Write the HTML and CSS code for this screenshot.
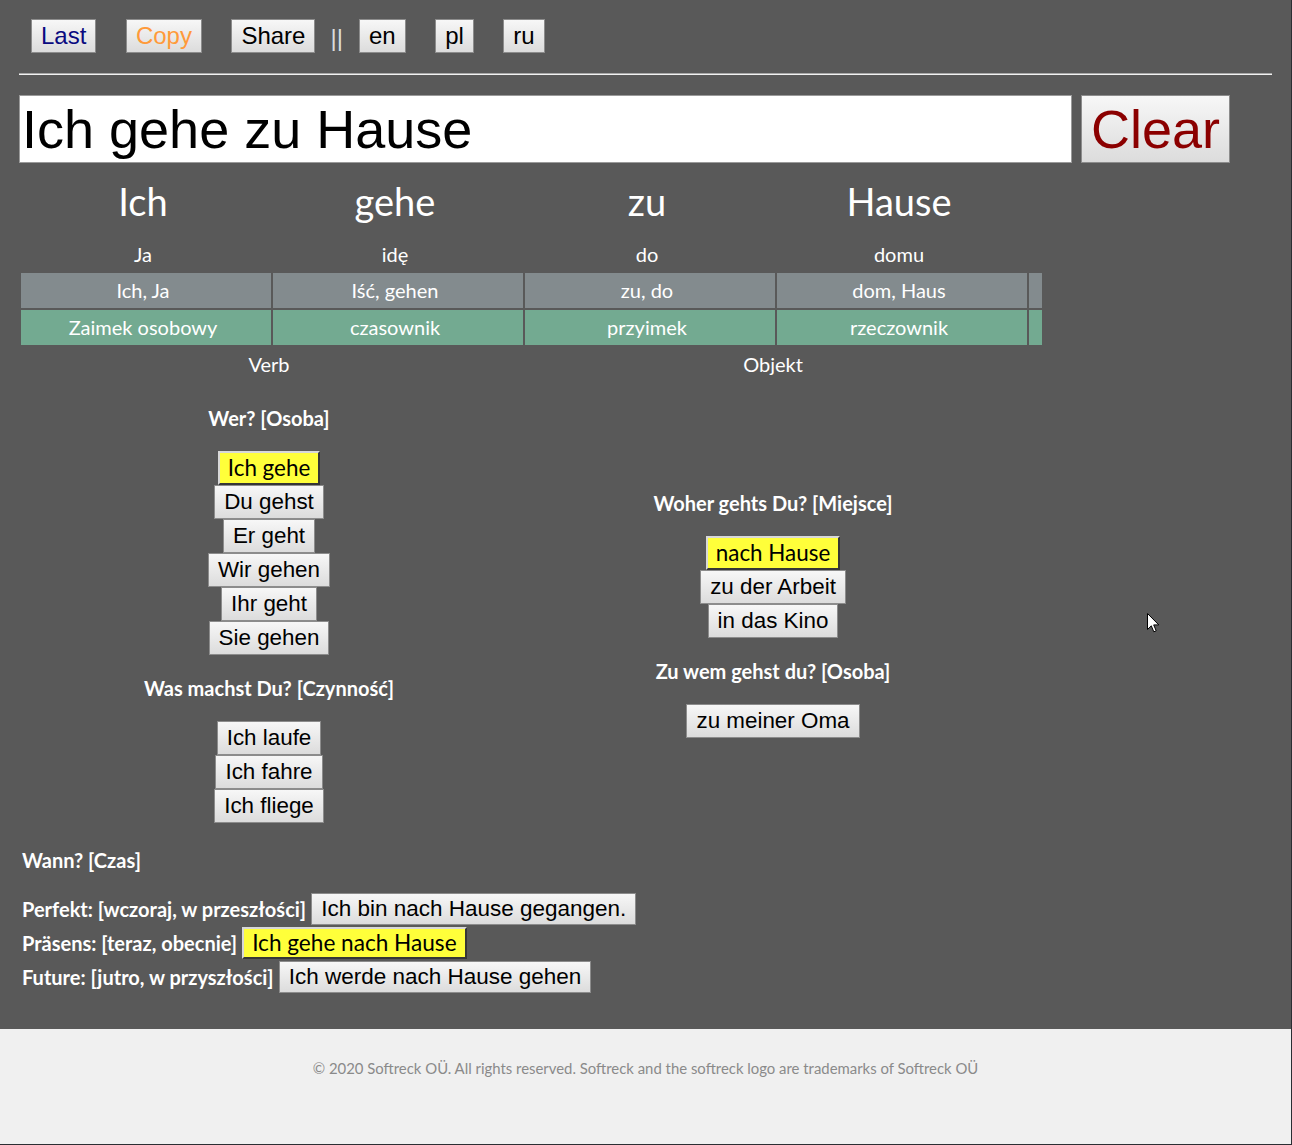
FILE: index.html
```html
<!DOCTYPE html>
<html lang="de">
<head>
<meta charset="utf-8">
<title>Ich gehe zu Hause</title>
<link rel="stylesheet" href="styles.css">
</head>
<body>
<div class="page">
  <main class="main">
    <div class="topbar">
      <button class="tbtn last">Last</button>
      <button class="tbtn copy">Copy</button>
      <button class="tbtn share">Share</button>
      <span class="sep">||</span>
      <button class="tbtn lang">en</button>
      <button class="tbtn lang">pl</button>
      <button class="tbtn lang">ru</button>
    </div>
    <hr class="rule">
    <div class="entry">
      <input class="sentence" type="text" value="Ich gehe zu Hause">
      <button class="clear">Clear</button>
    </div>
    <div class="grid">
      <div class="word">Ich</div>
      <div class="word">gehe</div>
      <div class="word">zu</div>
      <div class="word">Hause</div>
      <div class="word"></div>

      <div class="trans">Ja</div>
      <div class="trans">idę</div>
      <div class="trans">do</div>
      <div class="trans">domu</div>
      <div class="trans"></div>

      <div class="cell base">Ich, Ja</div>
      <div class="cell base">Iść, gehen</div>
      <div class="cell base">zu, do</div>
      <div class="cell base">dom, Haus</div>
      <div class="cell base"></div>

      <div class="cell pos">Zaimek osobowy</div>
      <div class="cell pos">czasownik</div>
      <div class="cell pos">przyimek</div>
      <div class="cell pos">rzeczownik</div>
      <div class="cell pos"></div>

      <div class="role span2">Verb</div>
      <div class="role span2">Objekt</div>
      <div class="role"></div>

      <div class="col span2">
        <h3 class="q">Wer? [Osoba]</h3>
        <button class="opt sel">Ich gehe</button>
        <button class="opt">Du gehst</button>
        <button class="opt">Er geht</button>
        <button class="opt">Wir gehen</button>
        <button class="opt">Ihr geht</button>
        <button class="opt">Sie gehen</button>
        <h3 class="q">Was machst Du? [Czynność]</h3>
        <button class="opt">Ich laufe</button>
        <button class="opt">Ich fahre</button>
        <button class="opt">Ich fliege</button>
      </div>
      <div class="col span2 middle">
        <h3 class="q">Woher gehts Du? [Miejsce]</h3>
        <button class="opt sel">nach Hause</button>
        <button class="opt">zu der Arbeit</button>
        <button class="opt">in das Kino</button>
        <h3 class="q">Zu wem gehst du? [Osoba]</h3>
        <button class="opt">zu meiner Oma</button>
      </div>
    </div>

    <section class="tenses">
      <h3 class="when">Wann? [Czas]</h3>
      <div class="tense"><span class="label">Perfekt: [wczoraj, w przeszłości]</span><button class="tbtn2">Ich bin nach Hause gegangen.</button></div>
      <div class="tense"><span class="label">Präsens: [teraz, obecnie]</span><button class="tbtn2 sel">Ich gehe nach Hause</button></div>
      <div class="tense"><span class="label">Future: [jutro, w przyszłości]</span><button class="tbtn2">Ich werde nach Hause gehen</button></div>
    </section>
  </main>
  <footer class="footer">© 2020 Softreck OÜ. All rights reserved. Softreck and the softreck logo are trademarks of Softreck OÜ</footer>
  <svg class="cursor" width="13" height="21" viewBox="0 0 13 21" aria-hidden="true">
    <path d="M0.5 0.5 L0.5 16.5 L4.3 12.8 L6.8 18.8 L9.2 17.8 L6.7 11.9 L11.8 11.9 Z" fill="#ffffff" stroke="#000000" stroke-width="1" stroke-linejoin="miter"/>
  </svg>
</div>
</body>
</html>
```

FILE: styles.css
```css
html {
  background: #2b2e33;
}
body {
  margin: 0;
}
.page {
  position: relative;
  width: 1291px;
}
.main {
  background: #595959;
  padding: 19px 19px 35px 19px;
  font-family: "Lato", "Open Sans", sans-serif;
  color: #ffffff;
}

/* top bar */
.topbar {
  display: flex;
  align-items: baseline;
  padding-left: 12px;
  height: 34px;
}
.tbtn {
  font-family: "Liberation Sans", Arial, sans-serif;
  font-size: 24px;
  line-height: 28px;
  padding: 2px 9px;
  border: 1px solid #8c8c8c;
  border-radius: 0;
  background: linear-gradient(#f7f7f7, #dcdcdc);
  color: #000000;
  margin: 0 29.5px 0 0;
}
.tbtn.last { color: #0a0a80; }
.tbtn.copy { color: #ff9a3a; }
.tbtn.share { margin-right: 15px; }
.sep {
  font-family: "Liberation Sans", Arial, sans-serif;
  font-size: 24px;
  color: #dcdcdc;
  margin-right: 16px;
  position: relative;
  top: 2px;
}

.rule {
  margin: 20px 0 0 0;
  height: 0;
  border: 0;
  border-top: 1px solid #a8a8a8;
  border-bottom: 1px solid #f2f2f2;
}

/* entry */
.entry {
  display: flex;
  margin-top: 20px;
}
.sentence {
  box-sizing: border-box;
  width: 1053px;
  height: 68px;
  padding: 2px;
  border: 1px solid #9a9a9a;
  font-family: "Liberation Sans", Arial, sans-serif;
  font-size: 54px;
  line-height: 62px;
  color: #000000;
  background: #ffffff;
  outline: none;
}
.clear {
  box-sizing: border-box;
  height: 68px;
  margin-left: 9px;
  padding: 2px 9px;
  border: 1px solid #8c8c8c;
  background: linear-gradient(#f7f7f7, #dcdcdc);
  font-family: "Liberation Sans", Arial, sans-serif;
  font-size: 54px;
  line-height: 62px;
  color: #8b0000;
}

/* analysis grid */
.grid {
  display: grid;
  grid-template-columns: repeat(4, 250px) 13px;
  grid-template-rows: 66px 33px 35px 35px 36px auto;
  gap: 2px;
  padding: 2px 0 2px 2px;
  margin-top: 5px;
  width: 1025px;
}
.grid > div {
  display: flex;
  align-items: center;
  justify-content: center;
  padding-right: 6px;
}
.word {
  font-size: 38px;
  font-weight: 400;
  padding-bottom: 4px;
  box-sizing: border-box;
}
.trans {
  font-size: 20px;
  padding-bottom: 2px;
  box-sizing: border-box;
}
.cell {
  font-size: 20px;
  padding-bottom: 1px;
  box-sizing: border-box;
}
.base { background: #838b8e; }
.pos { background: #73aa91; }
.role {
  font-size: 20px;
  padding-bottom: 2px;
  box-sizing: border-box;
}
.span2 { grid-column: span 2; }

.grid > .col {
  flex-direction: column;
  align-items: center;
  justify-content: flex-start;
  padding-bottom: 0;
}
.grid > .col.middle {
  justify-content: center;
}
.q {
  margin: 21px 0;
  font-size: 20px;
  line-height: 24px;
  font-weight: 700;
}
.opt {
  display: block;
  box-sizing: border-box;
  height: 34px;
  font-family: "Liberation Sans", Arial, sans-serif;
  font-size: 22.4px;
  line-height: 26px;
  padding: 3px 9px;
  border: 1px solid #8c8c8c;
  border-radius: 0;
  background: linear-gradient(#f7f7f7, #dcdcdc);
  color: #000000;
  margin: 0;
}
.opt.sel, .tbtn2.sel {
  font-family: "Lato", sans-serif;
  font-size: 22.4px;
  background: #ffff3a;
  border: 2px outset #d8d8d8;
  border-right-color: #8a8a8a;
  border-bottom-color: #8a8a8a;
  padding: 2px 8px;
}

/* tenses */
.tenses {
  padding-left: 3px;
}
.when {
  margin: 23px 0 20px 0;
  font-size: 20px;
  line-height: 24px;
  font-weight: 700;
}
.tense {
  display: flex;
  align-items: center;
  height: 34px;
}
.label {
  font-size: 20px;
  font-weight: 700;
  margin-right: 5px;
}
.tbtn2 {
  box-sizing: border-box;
  height: 32px;
  font-family: "Liberation Sans", Arial, sans-serif;
  font-size: 22.5px;
  line-height: 26px;
  padding: 2px 9px;
  border: 1px solid #8c8c8c;
  border-radius: 0;
  background: linear-gradient(#f7f7f7, #dcdcdc);
  color: #000000;
  margin: 0;
}
.tbtn2.sel {
  padding: 1px 8px;
  font-size: 22.6px;
}

/* footer */
.footer {
  height: 115px;
  box-sizing: border-box;
  padding-top: 30px;
  background: #f0f0f0;
  color: #8a8a8a;
  font-family: "Lato", sans-serif;
  font-size: 14.9px;
  line-height: 18px;
  text-align: center;
}

.cursor {
  position: absolute;
  left: 1147px;
  top: 613px;
}
```
